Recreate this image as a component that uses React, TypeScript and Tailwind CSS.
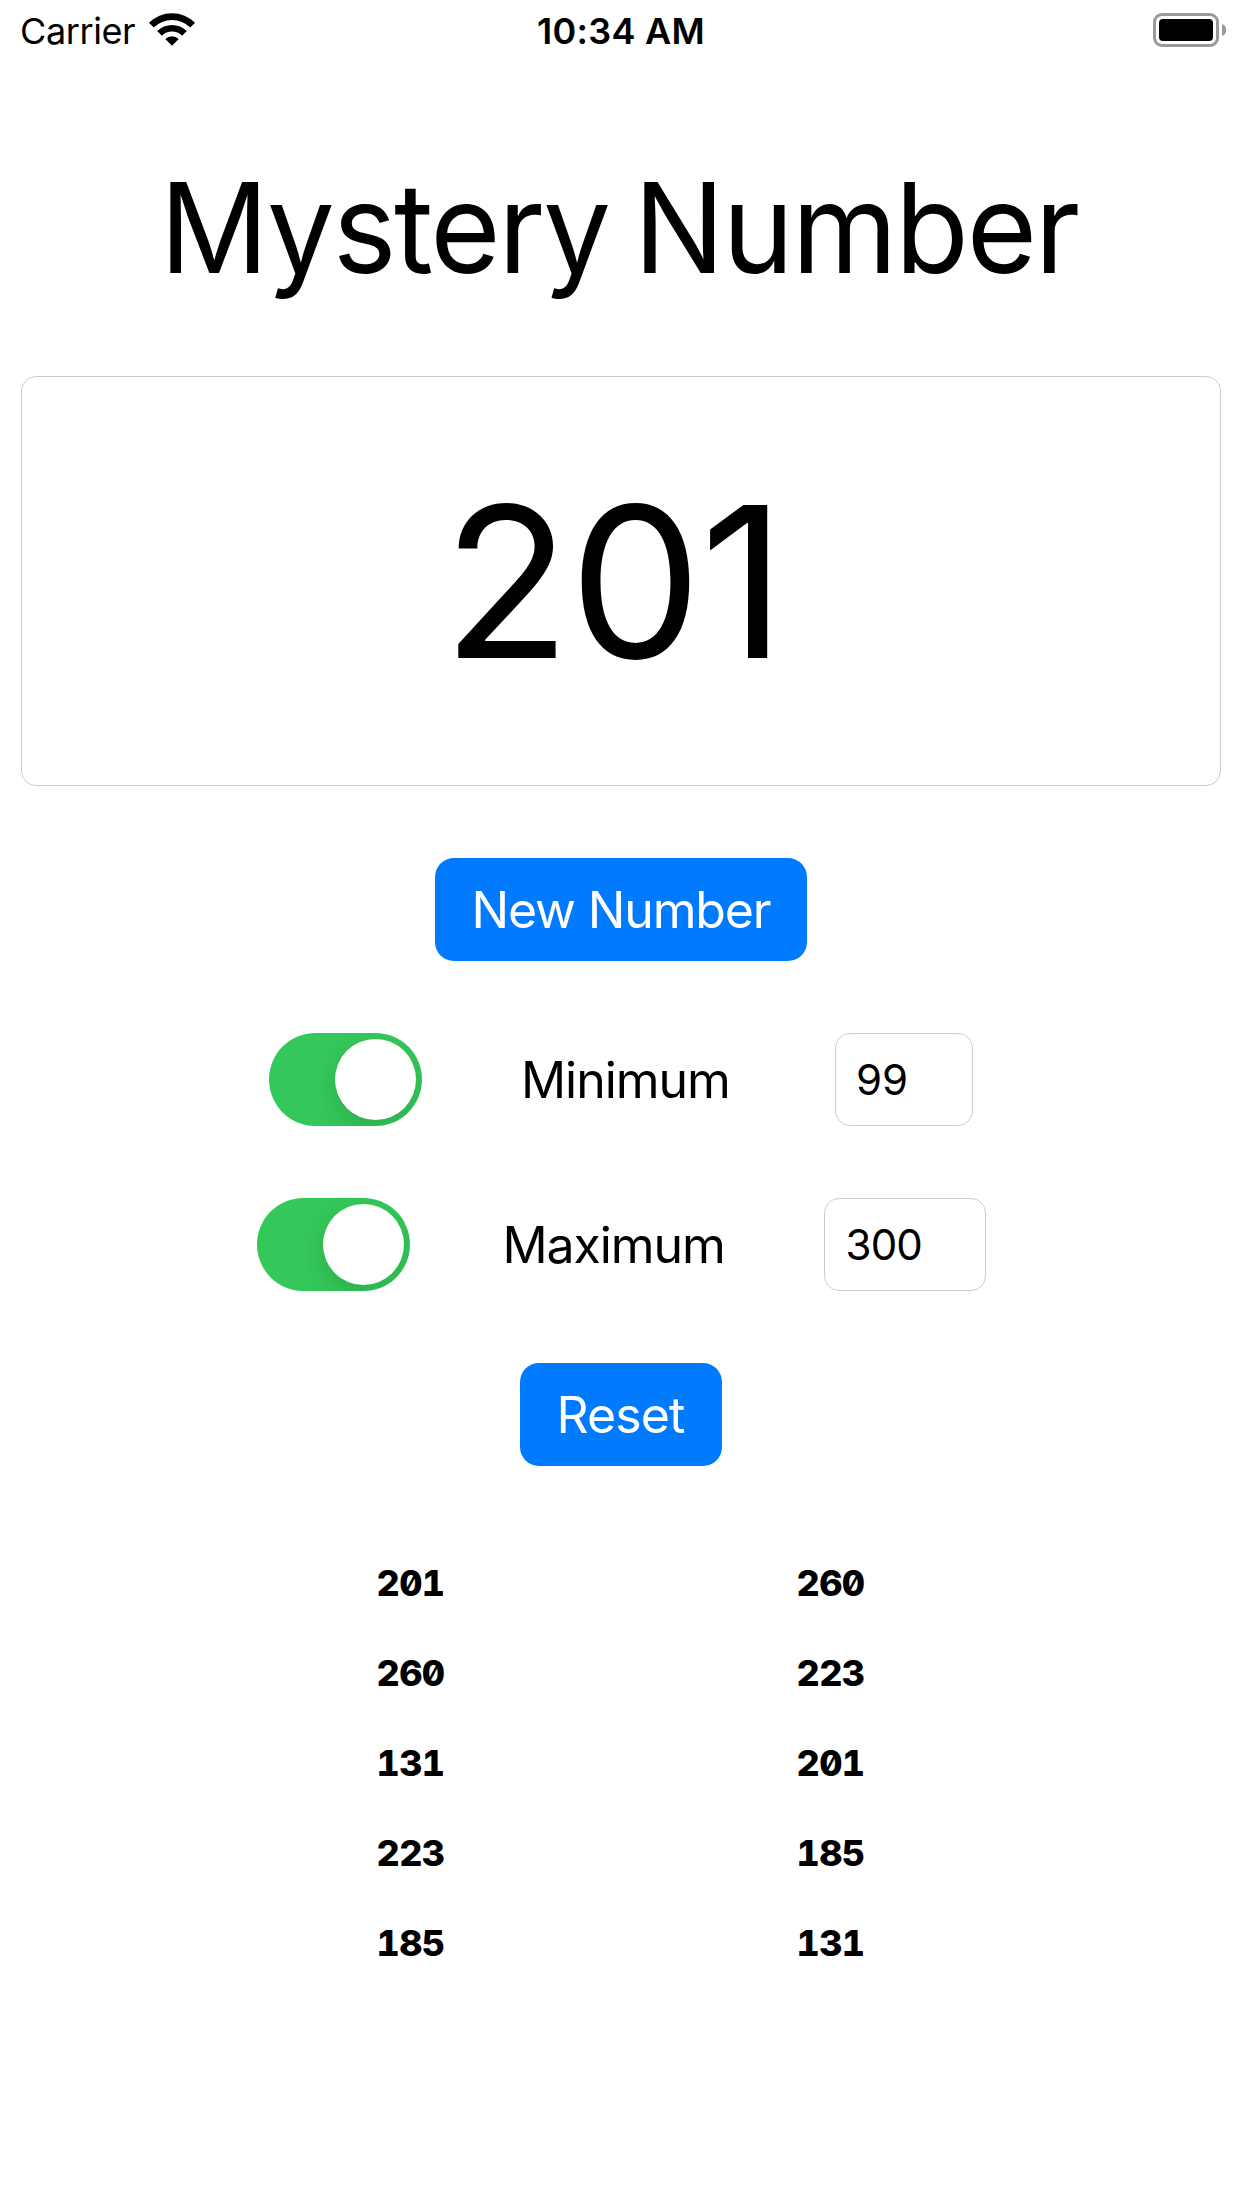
import React from "react";

const history = ["201", "260", "131", "223", "185"];
const sorted = ["260", "223", "201", "185", "131"];

function WifiIcon() {
  return (
    <svg width="46" height="34" viewBox="0 0 46 34" className="ml-[14px] mt-[13px]" fill="black">
      <path d="M0 9.8 A32.5 32.5 0 0 1 46 9.8 L41.3 14.5 A26 26 0 0 0 4.7 14.5 Z" />
      <path d="M8.2 18 A21 21 0 0 1 37.8 18 L33.1 22.7 A14.3 14.3 0 0 0 12.9 22.7 Z" />
      <path d="M16.3 26 A9.5 9.5 0 0 1 29.7 26 L23 32.7 Z" />
    </svg>
  );
}

function BatteryIcon() {
  return (
    <svg width="74" height="34" viewBox="0 0 74 34" className="mr-[15px] mt-[13px]">
      <rect x="1.5" y="1.5" width="63" height="31" rx="7.5" fill="none" stroke="#999" strokeWidth="3" />
      <rect x="6" y="6" width="54" height="22" rx="4" fill="black" />
      <path d="M69 11 A6.4 6.4 0 0 1 69 23 Z" fill="#999" />
    </svg>
  );
}

function Toggle() {
  return (
    <div className="flex h-[93px] w-[153px] items-center justify-end overflow-hidden rounded-full bg-[#34c759] pr-[6px]">
      <div className="size-[81px] rounded-full bg-white shadow-[0_9px_24px_rgba(0,0,0,0.13)]" />
    </div>
  );
}

function Column({ values }: { values: string[] }) {
  return (
    <div className="flex w-[67px] flex-col text-[36px] leading-[90px] font-extrabold tracking-[-0.6px] [font-feature-settings:'zero','tnum']">
      {values.map((v) => (
        <span key={v}>{v}</span>
      ))}
    </div>
  );
}

export default function App() {
  return (
    <div className="flex h-[2208px] w-[1242px] flex-col items-center bg-white font-['Inter',sans-serif] text-black">
      <header className="grid h-[60px] w-full grid-cols-3">
        <div className="flex">
          <span className="ml-[20px] text-[36px] leading-[62px] tracking-[-0.4px]">Carrier</span>
          <WifiIcon />
        </div>
        <span className="text-center text-[36px] leading-[62px] font-[560] tracking-[0.3px]">10:34 AM</span>
        <div className="flex justify-end">
          <BatteryIcon />
        </div>
      </header>

      <h1 className="mt-[92px] scale-x-[0.965] pr-[5px] text-[125px] leading-[152px] tracking-[-2.3px] whitespace-nowrap [word-spacing:-7px]">Mystery Number</h1>

      <div className="mt-[72px] flex h-[410px] w-[1200px] items-center justify-center rounded-[15px] border border-[#ccc] pt-[2px] pr-[15px] text-[210px] tracking-[-1.4px]">
        201
      </div>

      <button className="mt-[72px] flex h-[103px] w-[372px] items-center justify-center rounded-[19px] bg-[#007aff] pt-[2px] text-[50px] tracking-[-1.15px] text-white">
        New Number
      </button>

      <div className="mt-[72px] flex h-[93px] w-[704px] items-center">
        <Toggle />
        <span className="ml-[99px] w-[216px] pt-[2px] text-[50px] tracking-[-1.05px]">Minimum</span>
        <div className="ml-auto flex h-[93px] w-[138px] items-center rounded-[15px] border border-[#ccc] pl-[20px] text-[42px]">99</div>
      </div>

      <div className="mt-[72px] flex h-[93px] w-[729px] items-center">
        <Toggle />
        <span className="ml-[93px] w-[230px] pt-[2px] text-[50px] tracking-[-1.1px]">Maximum</span>
        <div className="ml-auto flex h-[93px] w-[162px] items-center rounded-[15px] border border-[#ccc] pl-[21px] text-[42px] tracking-[-0.8px]">300</div>
      </div>

      <button className="mt-[72px] flex h-[103px] w-[202px] items-center justify-center rounded-[19px] bg-[#007aff] pt-[2px] pr-px text-[50px] tracking-[-0.9px] text-white">
        Reset
      </button>

      <div className="mt-[72px] mr-[2px] flex w-[487px] justify-between">
        <Column values={history} />
        <Column values={sorted} />
      </div>
    </div>
  );
}
